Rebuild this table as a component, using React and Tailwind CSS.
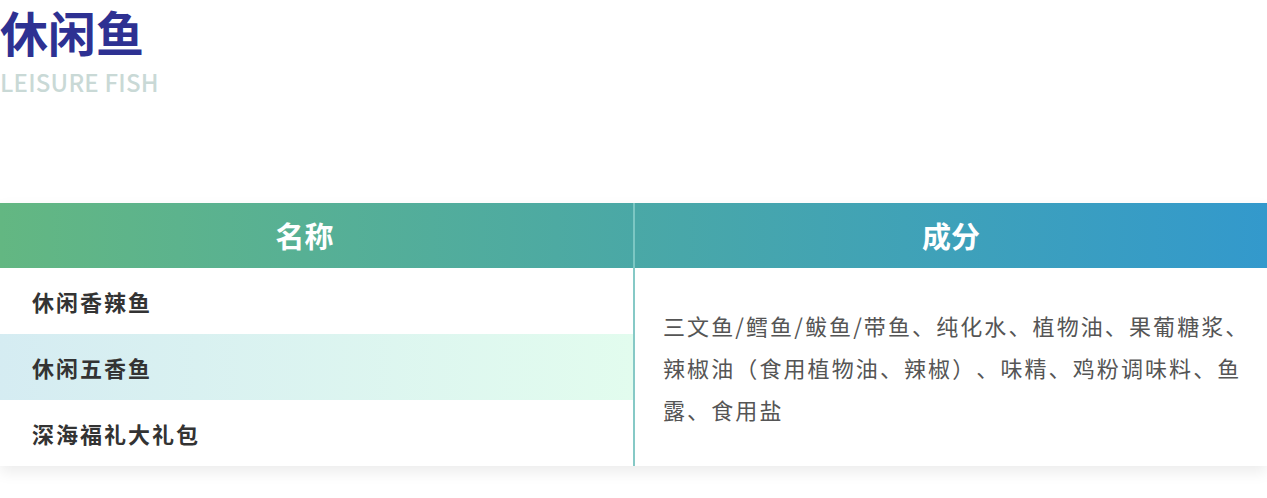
import React from 'react'

const font = { fontFamily: '"Noto Sans CJK SC", "Noto Sans", sans-serif' }

const rows = [
  { name: '休闲香辣鱼', active: false },
  { name: '休闲五香鱼', active: true },
  { name: '深海福礼大礼包', active: false },
]

const lines = [
  '三文鱼/鳕鱼/鲅鱼/带鱼、纯化水、植物油、果葡糖浆、',
  '辣椒油（食用植物油、辣椒）、味精、鸡粉调味料、鱼',
  '露、食用盐',
]

export default function App() {
  return (
    <div className="w-[1267px] h-[498px] bg-white overflow-hidden [text-spacing-trim:space-all]" style={font}>
      <div>
        <h1 className="text-[48px] leading-[62px] font-bold text-[#2e3192]">休闲鱼</h1>
        <p className="mt-[5px] text-[24px] leading-[30px] font-medium text-[#c9d9d6] tracking-[0.2px]">LEISURE FISH</p>
      </div>

      <div className="mt-[106px] shadow-[0_6px_14px_rgba(0,0,0,0.08)]">
        <div className="flex h-[65px] bg-gradient-to-r from-[#63b782] via-[#4aa8a6] to-[#3399cc] text-white text-[29px] font-bold">
          <div className="w-[633px] flex items-center justify-center pr-[24px]">名称</div>
          <div className="w-[2px] bg-[#7cc7c3]" />
          <div className="flex-1 flex items-center justify-center">成分</div>
        </div>
        <div className="flex">
          <div className="w-[633px]">
            {rows.map((r) => (
              <div
                key={r.name}
                className={
                  'h-[66px] flex items-center pl-[32px] text-[22px] font-bold text-[#333] tracking-[2px] ' +
                  (r.active ? 'bg-gradient-to-r from-[#d5ecf2] to-[#e2fcee]' : 'bg-white')
                }
              >
                {r.name}
              </div>
            ))}
          </div>
          <div className="w-[2px] bg-[#86c9c6]" />
          <div className="flex-1 flex flex-col justify-center pl-[28px] text-[22px] leading-[42px] text-[#555] tracking-[2.1px]">
            {lines.map((l) => (
              <div key={l} className="whitespace-nowrap">{l}</div>
            ))}
          </div>
        </div>
      </div>
    </div>
  )
}
